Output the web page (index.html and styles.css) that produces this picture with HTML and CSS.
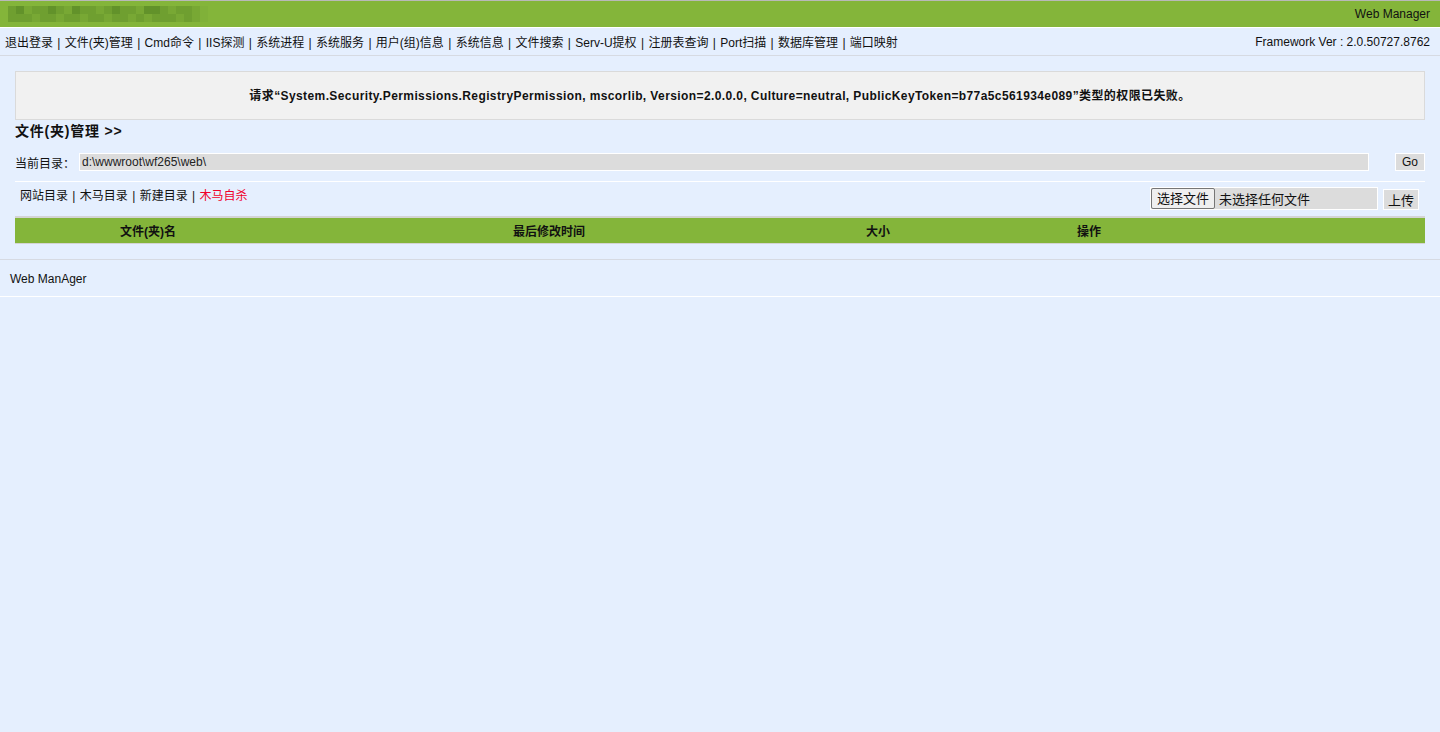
FILE: index.html
```html
<!DOCTYPE html>
<html lang="zh-CN">
<head>
  <meta charset="UTF-8">
  <title>Web Manager</title>
  <link rel="stylesheet" href="styles.css">
</head>
<body>
  <div class="topbar">
    <div class="mosaic">
      <span class="m2"></span><span class="m1"></span><span class="m3"></span><span class="m2"></span><span class="m2"></span><span class="m1"></span><span class="m2"></span><span class="m3"></span><span class="m1"></span><span class="m2"></span><span class="m2"></span><span class="m3"></span><span class="m2"></span><span class="m1"></span><span class="m2"></span><span class="m2"></span><span class="m3"></span><span class="m1"></span><span class="m1"></span><span class="m2"></span><span class="m3"></span><span class="m2"></span><span class="m2"></span><span class="m3"></span><span class="m4"></span>
      <span class="m2"></span><span class="m2"></span><span class="m2"></span><span class="m3"></span><span class="m2"></span><span class="m2"></span><span class="m3"></span><span class="m2"></span><span class="m2"></span><span class="m3"></span><span class="m2"></span><span class="m2"></span><span class="m3"></span><span class="m2"></span><span class="m2"></span><span class="m3"></span><span class="m2"></span><span class="m3"></span><span class="m2"></span><span class="m2"></span><span class="m2"></span><span class="m3"></span><span class="m2"></span><span class="m3"></span><span class="m4"></span>
    </div>
    <div class="brand">Web Manager</div>
  </div>

  <div class="nav">
    <div class="nav-links">
      <a href="#">退出登录</a> | <a href="#">文件(夹)管理</a> | <a href="#">Cmd命令</a> | <a href="#">IIS探测</a> | <a href="#">系统进程</a> | <a href="#">系统服务</a> | <a href="#">用户(组)信息</a> | <a href="#">系统信息</a> | <a href="#">文件搜索</a> | <a href="#">Serv-U提权</a> | <a href="#">注册表查询</a> | <a href="#">Port扫描</a> | <a href="#">数据库管理</a> | <a href="#">端口映射</a>
    </div>
    <div class="version">Framework Ver : 2.0.50727.8762</div>
  </div>

  <div class="main">
    <div class="error-box">请求“System.Security.Permissions.RegistryPermission, mscorlib, Version=2.0.0.0, Culture=neutral, PublicKeyToken=b77a5c561934e089”类型的权限已失败。</div>

    <div class="section-title">文件(夹)管理 &gt;&gt;</div>

    <div class="dir-row">
      <span class="dir-label">当前目录：</span>
      <div class="dir-input">d:\wwwroot\wf265\web\</div>
      <button class="btn">Go</button>
    </div>

    <div class="tool-row">
      <div class="tool-links">
        <a href="#">网站目录</a> | <a href="#">木马目录</a> | <a href="#">新建目录</a> | <a href="#" class="danger">木马自杀</a>
      </div>
      <div class="upload">
        <div class="file-box">
          <span class="file-btn">选择文件</span>
          <span class="file-name">未选择任何文件</span>
        </div>
        <button class="btn btn-upload">上传</button>
      </div>
    </div>

    <table class="file-table">
      <tr>
        <th class="col-name">文件(夹)名</th>
        <th class="col-time">最后修改时间</th>
        <th class="col-size">大小</th>
        <th class="col-op">操作</th>
        <th></th>
      </tr>
    </table>
  </div>

  <div class="footer">Web ManAger</div>
</body>
</html>
```

FILE: styles.css
```css
body {
  margin: 0;
  background: #e5effe;
  font-family: "Liberation Sans", "Noto Sans CJK SC", sans-serif;
  font-size: 12px;
  color: #111;
}

a {
  color: #111;
  text-decoration: none;
}

.topbar {
  display: flex;
  justify-content: space-between;
  align-items: center;
  height: 26px;
  background: #84b53a;
  border-top: 1px solid #b9b9b9;
  border-bottom: 1px solid #fff;
  padding: 0 10px 0 8px;
}

.mosaic {
  display: grid;
  grid-template-columns: repeat(25, 8px);
  grid-auto-rows: 8px;
}

.mosaic span {
  display: block;
}

.m1 { background: #62922a; }
.m2 { background: #6f9f30; }
.m3 { background: #78a834; }
.m4 { background: #80b139; }

.brand {
  color: #111;
}

.nav {
  display: flex;
  justify-content: space-between;
  align-items: center;
  height: 27px;
  padding: 0 10px 0 5px;
  border-bottom: 1px solid #d6dae2;
}

.nav-links {
  word-spacing: 1px;
}

.main {
  padding: 15px;
}

.error-box {
  background: #f1f1f1;
  border: 1px solid #dadada;
  height: 47px;
  line-height: 49px;
  text-align: center;
  font-weight: bold;
  letter-spacing: 0.4px;
}

.section-title {
  font-size: 14px;
  font-weight: bold;
  line-height: 22px;
  letter-spacing: 0.8px;
}

.dir-row {
  display: flex;
  align-items: center;
  margin-top: 11px;
  padding-bottom: 10px;
  border-bottom: 1px solid #fff;
}

.dir-label {
  width: 64px;
}

.dir-input {
  flex: 1;
  height: 16px;
  line-height: 16px;
  background: #dcdcdc;
  border: 1px solid #fff;
  padding: 0 2px;
  margin-right: 26px;
  color: #222;
}

.btn {
  background: #dcdcdc;
  border: 1px solid #fff;
  font-family: "Liberation Sans", "Noto Sans CJK SC", sans-serif;
  font-size: 12px;
  color: #111;
  height: 18px;
  padding: 0 6px;
  cursor: pointer;
}

.tool-row {
  display: flex;
  justify-content: space-between;
  align-items: flex-start;
  height: 34px;
  padding: 0 6px 0 5px;
}

.tool-links {
  margin-top: 6px;
  line-height: 16px;
  word-spacing: 1px;
}

.tool-links .danger {
  color: #f0002a;
}

.upload {
  display: flex;
  align-items: flex-start;
  margin-top: 5px;
}

.file-box {
  display: flex;
  align-items: center;
  width: 226px;
  height: 21px;
  background: #dcdcdc;
  border: 1px solid #fff;
  margin-right: 5px;
}

.file-btn {
  height: 19px;
  line-height: 19px;
  padding: 0 5px;
  background: #efefef;
  border: 1px solid #767676;
  border-radius: 2px;
  font-size: 13px;
  margin-right: 4px;
}

.file-name {
  font-size: 13px;
}

.btn-upload {
  height: 21px;
  margin-top: 2px;
  padding: 0 4px;
  font-size: 13px;
}

.file-table {
  width: 100%;
  border-collapse: collapse;
  border-top: 2px solid #d4d4d4;
  border-bottom: 1px solid #d4d4d4;
  background: #84b53a;
}

.file-table th {
  height: 25px;
  padding: 0;
  font-size: 12px;
}

.col-name { width: 266px; }
.col-time { width: 536px; }
.col-size { width: 122px; }
.col-op { width: 300px; }

.footer {
  height: 36px;
  line-height: 38px;
  padding-left: 10px;
  border-top: 1px solid #d6dae2;
  border-bottom: 1px solid #fff;
}
```
